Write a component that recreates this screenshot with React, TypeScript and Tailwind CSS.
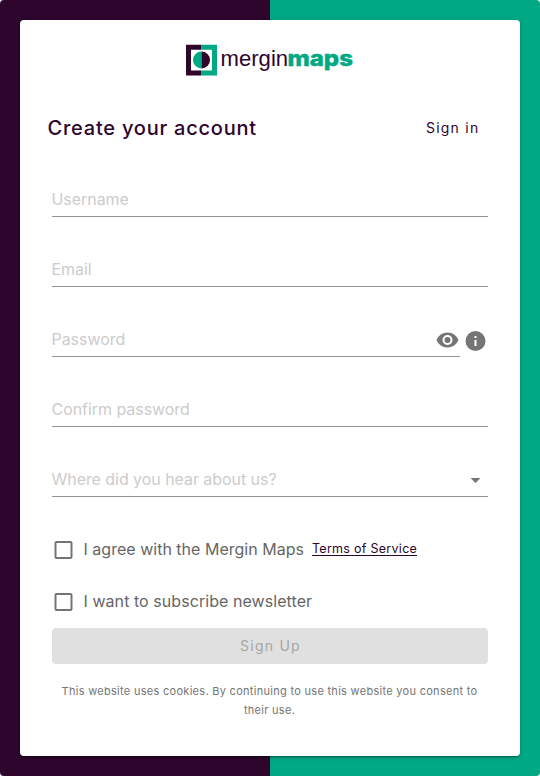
import React from "react";

function Logo() {
  return (
    <svg width="168" height="36" viewBox="0 0 168 36" className="block" role="img" aria-label="merginmaps">
      <path fill="#2d052d" d="M0 4.7h15.5v5H5v20.8h10.5v5H0z" />
      <path fill="#00a884" d="M15.5 4.7H31v30.8H15.5v-5H26V9.7H15.5z" />
      <path fill="#00a884" d="M15.5 11.6a8.5 8.5 0 0 0 0 17z" />
      <path fill="#2d052d" d="M15.5 11.6a8.5 8.5 0 0 1 0 17z" />
      <text x="34.6" y="25.6" fontSize="22.5" fill="#2d052d" textLength="67.5" lengthAdjust="spacingAndGlyphs" fontFamily="Liberation Sans, sans-serif">
        mergin
      </text>
      <text x="101.4" y="25.6" fontSize="22" fontWeight="800" fill="#00a884" stroke="#00a884" strokeWidth="0.4" textLength="65.6" lengthAdjust="spacingAndGlyphs" fontFamily="Inter, sans-serif">
        maps
      </text>
    </svg>
  );
}

function Icon({ d, className = "" }: { d: string; className?: string }) {
  return (
    <svg width="24" height="24" viewBox="0.5 0 24 24" fill="#757575" className={`block shrink-0 ${className}`}>
      <path d={d} />
    </svg>
  );
}

const EYE =
  "M12,9A3,3 0 0,0 9,12A3,3 0 0,0 12,15A3,3 0 0,0 15,12A3,3 0 0,0 12,9M12,17A5,5 0 0,1 7,12A5,5 0 0,1 12,7A5,5 0 0,1 17,12A5,5 0 0,1 12,17M12,4.5C7,4.5 2.73,7.61 1,12C2.73,16.39 7,19.5 12,19.5C17,19.5 21.27,16.39 23,12C21.27,7.61 17,4.5 12,4.5Z";
const INFO =
  "M13,9H11V7H13M13,17H11V11H13M12,2A10,10 0 0,0 2,12A10,10 0 0,0 12,22A10,10 0 0,0 22,12A10,10 0 0,0 12,2Z";
const CHECKBOX =
  "M19,3H5C3.89,3 3,3.89 3,5V19A2,2 0 0,0 5,21H19A2,2 0 0,0 21,19V5C21,3.89 20.1,3 19,3M19,5V19H5V5H19Z";
const CARET = "M7,10L12,15L17,10H7Z";

function Field({ label, type = "text" }: { label: string; type?: string }) {
  return (
    <input
      type={type}
      placeholder={label}
      className="block h-[35px] w-full border-b border-[#949494] pb-px indent-[-0.5px] text-[16px] leading-5 tracking-[-0.05px] text-[#2d052d] outline-none placeholder:text-[#cccccc]"
    />
  );
}

function Check() {
  return (
    <button type="button" role="checkbox" aria-checked="false" className="flex h-6 w-[23.5px] items-center">
      <Icon d={CHECKBOX} />
    </button>
  );
}

export default function App() {
  return (
    <main className="h-[776px] w-[540px] rounded-[4px] bg-[linear-gradient(90deg,#2d052d_50%,#00a884_50%)] p-5 font-['Inter',sans-serif]">
      <section className="h-[736px] rounded-[4px] bg-white px-7 pt-5 shadow-[0_3px_1px_-2px_rgba(0,0,0,0.2),0_2px_2px_0_rgba(0,0,0,0.14),0_1px_5px_0_rgba(0,0,0,0.12)]">
        <header className="flex h-10 justify-center">
          <Logo />
        </header>
        <div className="mt-[30px] flex h-9 items-center justify-between pr-[12.5px]">
          <h1 className="ml-[-0.5px] text-[20px] font-medium leading-8 tracking-[0.77px] text-[#2d052d]">Create your account</h1>
          <button className="text-[14px] leading-5 tracking-[1.25px] text-[#2d052d]">Sign in</button>
        </div>
        <form className="px-1 pt-9">
          <div className="flex flex-col gap-[35px]">
            <Field label="Username" />
            <Field label="Email" />
            <div className="relative h-[35px] pr-7">
              <Field label="Password" type="password" />
              <Icon d={EYE} className="absolute top-1.5 right-7" />
              <Icon d={INFO} className="absolute top-[7px] right-0" />
            </div>
            <Field label="Confirm password" type="password" />
            <div className="relative">
              <Field label="Where did you hear about us?" />
              <Icon d={CARET} className="absolute top-1.5 right-0" />
            </div>
          </div>
          <div className="mt-[41px] flex h-6 items-center">
            <Check />
            <span className="mt-[-2px] ml-2 text-[16px] leading-5 tracking-[0.015px] text-[#666666]">I agree with the Mergin Maps</span>
            <a className="mt-[-1px] ml-2 border-b border-[#2d052d] text-[12.5px] leading-[12px] tracking-[0.28px] text-[#2d052d]">Terms of Service</a>
          </div>
          <div className="mt-7 flex h-6 items-center">
            <Check />
            <span className="mt-[-2px] ml-2 text-[16px] leading-5 tracking-[0.06px] text-[#666666]">I want to subscribe newsletter</span>
          </div>
          <button disabled className="mt-3.5 block h-9 w-full rounded-[4px] bg-[#e0e0e0] pl-px text-[14px] leading-5 tracking-[1.25px] text-[#a6a6a6]">
            Sign Up
          </button>
          <p className="mt-[18px] mr-px text-center text-[11px] leading-[19px] tracking-[0.29px] text-[#757575]">
            This website uses cookies. By continuing to use this website you consent to their use.
          </p>
        </form>
      </section>
    </main>
  );
}
